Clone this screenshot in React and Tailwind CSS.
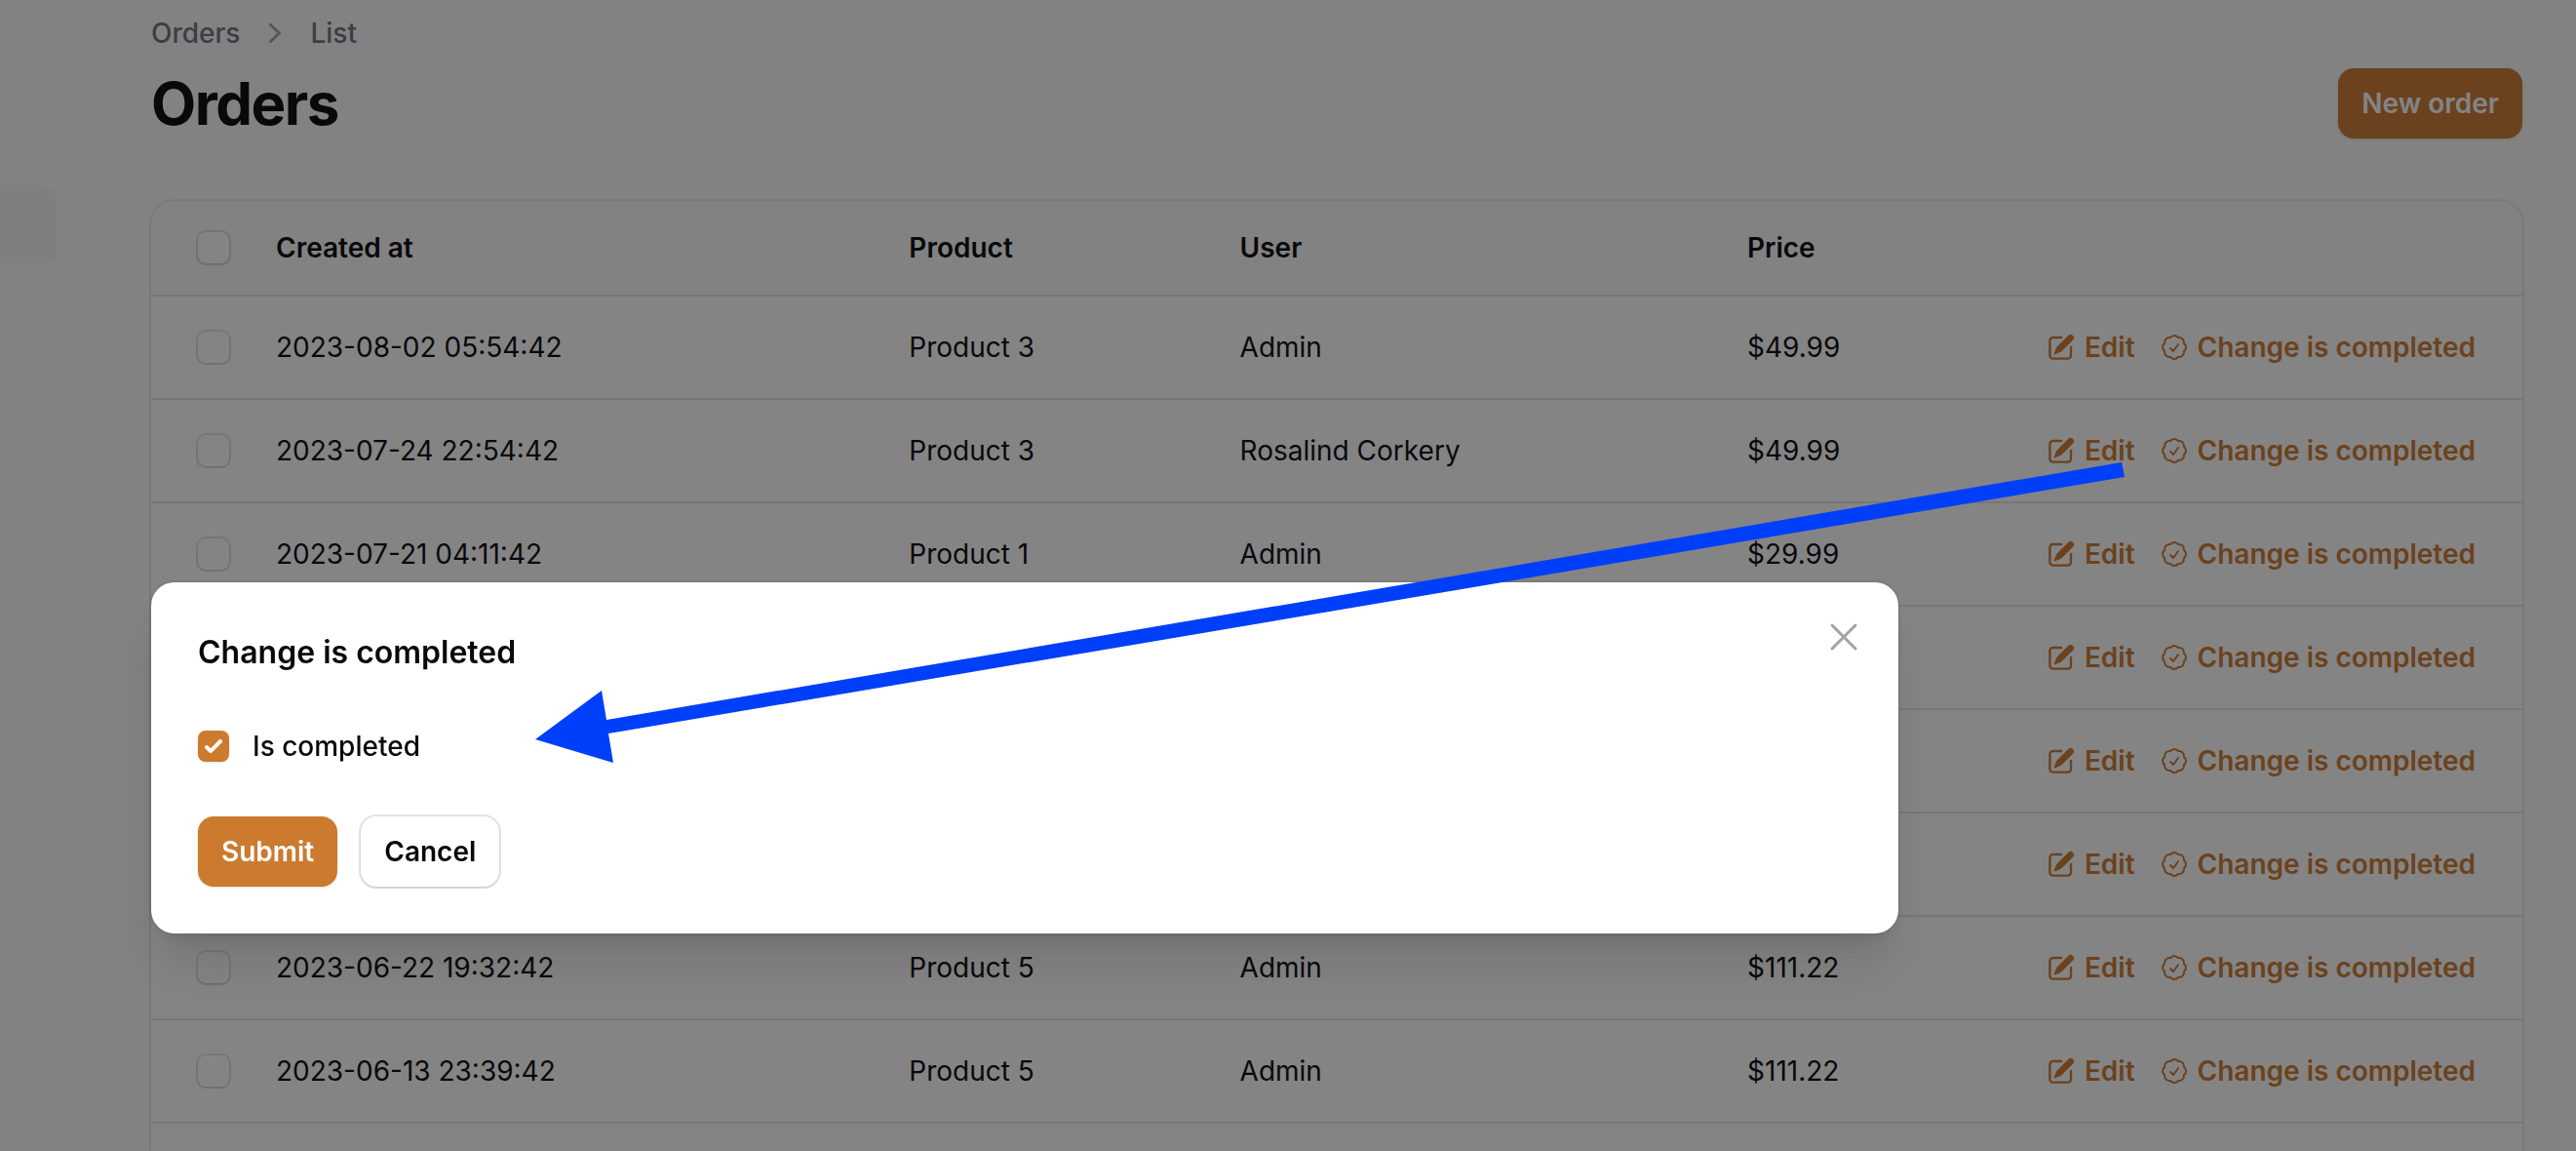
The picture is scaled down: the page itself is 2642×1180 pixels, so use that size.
import { HiMiniPencilSquare, HiOutlineCheckBadge, HiOutlineXMark } from "react-icons/hi2";

const orders = [
  { id: 1, createdAt: "2023-08-02 05:54:42", product: "Product 3", user: "Admin", price: "$49.99" },
  { id: 2, createdAt: "2023-07-24 22:54:42", product: "Product 3", user: "Rosalind Corkery", price: "$49.99" },
  { id: 3, createdAt: "2023-07-21 04:11:42", product: "Product 1", user: "Admin", price: "$29.99" },
  { id: 4 },
  { id: 5 },
  { id: 6 },
  { id: 7, createdAt: "2023-06-22 19:32:42", product: "Product 5", user: "Admin", price: "$111.22" },
  { id: 8, createdAt: "2023-06-13 23:39:42", product: "Product 5", user: "Admin", price: "$111.22" },
];

function ChevronRight({ className }) {
  return (
    <svg viewBox="0 0 20 20" fill="currentColor" aria-hidden="true" className={className}>
      <path
        fillRule="evenodd"
        clipRule="evenodd"
        d="M7.21 14.77a.75.75 0 01.02-1.06L11.168 10 7.23 6.29a.75.75 0 111.04-1.08l4.5 4.25a.75.75 0 010 1.08l-4.5 4.25a.75.75 0 01-1.06-.02z"
      />
    </svg>
  );
}

function RowCheckbox({ label }) {
  return (
    <input
      type="checkbox"
      aria-label={label}
      className="block size-8 appearance-none rounded-lg bg-white shadow-sm ring-2 ring-[#09090b]/10 checked:bg-[#cb7a2e]"
    />
  );
}

function RowAction({ icon: Icon, children }) {
  return (
    <button type="button" className="flex items-center gap-2 font-semibold text-[#cd7b2e]">
      <Icon className="size-8" aria-hidden="true" />
      {children}
    </button>
  );
}

function OrdersTable() {
  return (
    <div className="flex-1 overflow-hidden rounded-t-3xl bg-white shadow-sm ring-2 ring-[#09090b]/5">
      <table className="w-full table-fixed text-left text-[28px] leading-10">
        <colgroup>
          <col className="w-[104px]" />
          <col className="w-[26.7%]" />
          <col className="w-[13.95%]" />
          <col className="w-[21.4%]" />
          <col />
        </colgroup>
        <thead className="bg-[#fafafa]">
          <tr className="h-[97px]">
            <th className="pl-12">
              <RowCheckbox label="Select all orders" />
            </th>
            <th className="px-6 font-semibold">Created at</th>
            <th className="px-6 font-semibold">Product</th>
            <th className="px-6 font-semibold">User</th>
            <th className="px-6 font-semibold">Price</th>
          </tr>
        </thead>
        <tbody className="border-b-2 border-[#e4e4e7]">
          {orders.map((order) => (
            <tr key={order.id} className="h-[106px] border-t-2 border-[#e4e4e7]">
              <td className="pl-12">
                <RowCheckbox label={`Select order ${order.id}`} />
              </td>
              <td className="px-6">{order.createdAt}</td>
              <td className="px-6">{order.product}</td>
              <td className="px-6">{order.user}</td>
              <td className="pr-12 pl-6">
                <div className="flex items-center justify-between">
                  <span>{order.price}</span>
                  <div className="flex items-center gap-6">
                    <RowAction icon={HiMiniPencilSquare}>Edit</RowAction>
                    <RowAction icon={HiOutlineCheckBadge}>Change is completed</RowAction>
                  </div>
                </div>
              </td>
            </tr>
          ))}
        </tbody>
      </table>
    </div>
  );
}

function CompletedDialog() {
  return (
    <div
      role="dialog"
      aria-modal="true"
      aria-labelledby="dialog-title"
      className="relative flex w-full max-w-[1792px] flex-col gap-12 rounded-3xl bg-white p-12 shadow-[0_40px_50px_-10px_rgba(0,0,0,0.1),0_16px_20px_-12px_rgba(0,0,0,0.1)] ring-2 ring-[#09090b]/5"
    >
      <button type="button" aria-label="Close" className="absolute top-8 right-8 text-[#a1a1aa]">
        <HiOutlineXMark className="size-12" aria-hidden="true" />
      </button>
      <h2 id="dialog-title" className="text-[32px] leading-12 font-semibold">
        Change is completed
      </h2>
      <label className="flex items-center gap-6 text-[28px] leading-12 font-medium">
        <span className="grid size-8">
          <input
            type="checkbox"
            defaultChecked
            className="peer col-start-1 row-start-1 size-8 appearance-none rounded-lg bg-white shadow-sm checked:bg-[#cb7a2e]"
          />
          <svg
            viewBox="0 0 16 16"
            fill="white"
            aria-hidden="true"
            className="pointer-events-none invisible col-start-1 row-start-1 size-8 peer-checked:visible"
          >
            <path d="M12.207 4.793a1 1 0 010 1.414l-5 5a1 1 0 01-1.414 0l-2-2a1 1 0 011.414-1.414L6.5 9.086l4.293-4.293a1 1 0 011.414 0z" />
          </svg>
        </span>
        Is completed
      </label>
      <div className="flex gap-6 text-[28px] leading-10 font-semibold">
        <button type="submit" className="rounded-2xl bg-[#cb7a2e] px-6 py-4 text-white shadow-sm">
          Submit
        </button>
        <button type="button" className="rounded-2xl bg-white px-6 py-4 shadow-sm ring-2 ring-[#09090b]/10">
          Cancel
        </button>
      </div>
    </div>
  );
}

function PointerArrow() {
  return (
    <svg
      width="1640"
      height="320"
      viewBox="545 470 1640 320"
      fill="#003ff9"
      aria-hidden="true"
      className="pointer-events-none absolute top-[470px] left-[545px]"
    >
      <path d="M549 758L617 708L622 738L2176 474L2179 489L624 752L629 782Z" />
    </svg>
  );
}

export default function App() {
  return (
    <div className="relative flex h-screen overflow-hidden bg-[#fafafa] font-['Inter',sans-serif] text-[#09090b]">
      <aside className="w-[155px] shrink-0 pt-[190px]">
        <div className="h-20 w-[58px] rounded-r-2xl bg-[#f4f4f5]" />
      </aside>

      <main className="flex min-w-0 flex-1 flex-col gap-16 pt-3.5 pr-[55px]">
        <header className="flex flex-col gap-4">
          <nav aria-label="Breadcrumb" className="flex items-center gap-4 text-[28px] leading-10 font-medium text-[#71717a]">
            <a href="#orders">Orders</a>
            <ChevronRight className="size-10 text-[#a1a1aa]" />
            <a href="#list">List</a>
          </nav>
          <div className="flex items-center justify-between">
            <h1 className="text-6xl leading-[72px] font-bold tracking-tight">Orders</h1>
            <button
              type="button"
              className="rounded-2xl bg-[#cd7b2e] px-6 py-4 text-[28px] leading-10 font-semibold text-white shadow-sm"
            >
              New order
            </button>
          </div>
        </header>
        <OrdersTable />
      </main>

      <div className="fixed inset-0 flex items-start bg-[#09090b]/50 pt-[597px] pr-[55px] pl-[155px]">
        <CompletedDialog />
      </div>

      <PointerArrow />
    </div>
  );
}
